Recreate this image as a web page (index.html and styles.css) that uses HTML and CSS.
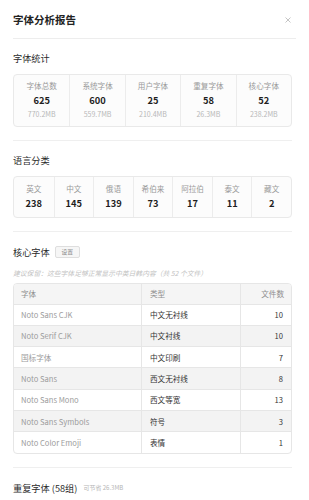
FILE: index.html
```html
<!DOCTYPE html>
<html lang="zh-CN">

<head>
    <meta charset="UTF-8">
    <meta name="viewport" content="width=device-width, initial-scale=1.0">
    <title>字体分析报告</title>
    <link rel="stylesheet" href="styles.css">
</head>

<body>
    <div class="panel">
        <div class="header">
            <h1>字体分析报告</h1>
            <svg class="close" width="6" height="6" viewBox="0 0 6 6">
                <path d="M0.5 0.5 L5.5 5.5 M5.5 0.5 L0.5 5.5" stroke="#b5b5b5" stroke-width="0.8" fill="none" />
            </svg>
        </div>

        <!-- 字体统计 -->
        <div class="section first">
            <h2>字体统计</h2>
            <div class="stats">
                <div class="stat">
                    <div class="label">字体总数</div>
                    <div class="num">625</div>
                    <div class="size">770.2MB</div>
                </div>
                <div class="stat">
                    <div class="label">系统字体</div>
                    <div class="num">600</div>
                    <div class="size">559.7MB</div>
                </div>
                <div class="stat">
                    <div class="label">用户字体</div>
                    <div class="num">25</div>
                    <div class="size">210.4MB</div>
                </div>
                <div class="stat">
                    <div class="label">重复字体</div>
                    <div class="num">58</div>
                    <div class="size">26.3MB</div>
                </div>
                <div class="stat">
                    <div class="label">核心字体</div>
                    <div class="num">52</div>
                    <div class="size">238.2MB</div>
                </div>
            </div>
        </div>

        <!-- 语言分类 -->
        <div class="section">
            <h2>语言分类</h2>
            <div class="langs">
                <div class="lang"><div class="label">英文</div><div class="num">238</div></div>
                <div class="lang"><div class="label">中文</div><div class="num">145</div></div>
                <div class="lang"><div class="label">俄语</div><div class="num">139</div></div>
                <div class="lang"><div class="label">希伯来</div><div class="num">73</div></div>
                <div class="lang"><div class="label">阿拉伯</div><div class="num">17</div></div>
                <div class="lang"><div class="label">泰文</div><div class="num">11</div></div>
                <div class="lang"><div class="label">藏文</div><div class="num">2</div></div>
            </div>
        </div>

        <!-- 核心字体 -->
        <div class="section core">
            <div class="title-row">
                <h2>核心字体</h2>
                <button class="btn">设置</button>
            </div>
            <p class="note">建议保留：这些字体足够正常显示中英日韩内容（共 52 个文件）</p>
            <div class="table-wrap">
                <table>
                    <thead>
                        <tr>
                            <th>字体</th>
                            <th>类型</th>
                            <th class="count">文件数</th>
                        </tr>
                    </thead>
                    <tbody>
                        <tr><td class="name">Noto Sans CJK</td><td>中文无衬线</td><td class="count">10</td></tr>
                        <tr><td class="name">Noto Serif CJK</td><td>中文衬线</td><td class="count">10</td></tr>
                        <tr><td class="name">国标字体</td><td>中文印刷</td><td class="count">7</td></tr>
                        <tr><td class="name">Noto Sans</td><td>西文无衬线</td><td class="count">8</td></tr>
                        <tr><td class="name">Noto Sans Mono</td><td>西文等宽</td><td class="count">13</td></tr>
                        <tr><td class="name">Noto Sans Symbols</td><td>符号</td><td class="count">3</td></tr>
                        <tr><td class="name">Noto Color Emoji</td><td>表情</td><td class="count">1</td></tr>
                    </tbody>
                </table>
            </div>
        </div>

        <!-- 重复字体 -->
        <div class="section last">
            <div class="title-row">
                <h2>重复字体 (58组)</h2>
                <span class="hint">可节省 26.3MB</span>
            </div>
        </div>
    </div>
</body>

</html>
```

FILE: styles.css
```css
body {
    margin: 0;
    padding: 0;
    background: #ffffff;
    font-family: "Noto Sans CJK SC", "Noto Sans", sans-serif;
    color: #333;
}

.panel {
    padding: 0 17px 0 13px;
}

.header {
    display: flex;
    justify-content: space-between;
    align-items: center;
    margin-right: -4px;
    padding: 13px 0 10.5px;
    border-bottom: 1px solid #ededed;
}

h1 {
    margin: 0;
    font-size: 10.5px;
    line-height: 14px;
    font-weight: 600;
    color: #222;
}

.close {
    display: block;
    margin-right: 5px;
}

.section {
    padding: 13px 0;
    border-bottom: 1px solid #efefef;
}

.section.core {
    padding-top: 14px;
}

.section.last {
    border-bottom: none;
    padding-top: 14px;
}

h2 {
    margin: 0 0 10px;
    font-size: 9.2px;
    line-height: 12px;
    font-weight: 400;
    color: #2a2a2a;
}

/* stat boxes */
.stats,
.langs {
    display: grid;
    border: 1px solid #e9e9e9;
    border-radius: 4px;
    background: #fcfcfc;
    text-align: center;
}

.stats {
    grid-template-columns: repeat(5, 1fr);
    padding: 4.5px 0;
}

.langs {
    grid-template-columns: repeat(7, 1fr);
    padding: 4px 0 6px;
}

.stat,
.lang {
    border-left: 1px solid #ececec;
    margin: -4.5px 0;
    padding: 4.5px 0;
}

.lang {
    margin: -4px 0 -6px;
    padding: 4px 0 6px;
}

.stat:first-child,
.lang:first-child {
    border-left: none;
}

.label {
    font-size: 7.6px;
    color: #9a9a9a;
}

.stat .label,
.stat .num,
.stat .size {
    line-height: 14px;
}

.lang .label,
.lang .num {
    line-height: 15px;
}

.num {
    font-size: 9.3px;
    font-weight: 700;
    color: #1e1e1e;
}

.size {
    font-size: 7px;
    color: #b8b8b8;
}

/* core fonts */
.title-row {
    display: flex;
    align-items: center;
    gap: 5px;
    height: 12px;
}

.title-row h2 {
    margin: 0;
}

.btn {
    height: 12px;
    width: 25px;
    padding: 0;
    font-family: inherit;
    font-size: 5.8px;
    line-height: 10px;
    color: #888;
    background: #f6f6f6;
    border: 1px solid #dedede;
    border-radius: 2px;
}

.note {
    margin: 11px 0 5px;
    font-size: 6.8px;
    line-height: 9px;
    font-style: italic;
    color: #c2c2c2;
}

.table-wrap {
    border: 1px solid #e6e6e6;
    border-radius: 4px;
    overflow: hidden;
}

table {
    width: 100%;
    border-collapse: collapse;
    table-layout: fixed;
    font-size: 7.6px;
}

th,
td {
    padding: 0 7px;
    text-align: left;
    border-left: 1px solid #e6e6e6;
    border-top: 1px solid #e6e6e6;
}

th:first-child,
td:first-child {
    border-left: none;
    width: 113px;
}

th:nth-child(2),
td:nth-child(2) {
    width: 83px;
    padding-left: 8px;
}

th {
    height: 20px;
    border-top: none;
    font-weight: 400;
    color: #8e8e8e;
    background: #f5f5f5;
}

td {
    height: 20.3px;
    color: #333;
}

tbody tr:nth-child(even) td {
    background: #f3f3f3;
}

td.name {
    color: #9c9c9c;
}

.count {
    text-align: right;
    padding-right: 8px;
}

th.count {
    padding-right: 7px;
}

.hint {
    font-size: 6px;
    color: #b5b5b5;
    margin-left: 1px;
}
```
